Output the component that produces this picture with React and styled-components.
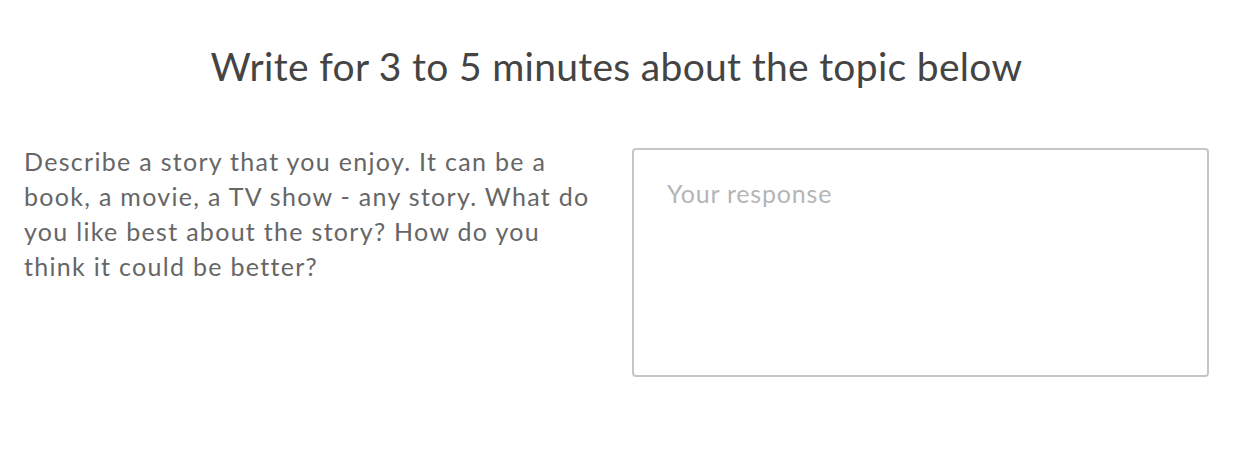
import React from "react";
import styled, { createGlobalStyle } from "styled-components";

const GlobalStyle = createGlobalStyle`
  body {
    margin: 0;
    background: #fff;
    font-family: Lato, "Open Sans", sans-serif;
  }
`;

const Page = styled.div`
  padding: 0 24px;
`;

const Title = styled.h1`
  margin: 0;
  padding-top: 40px;
  text-align: center;
  font-size: 39px;
  font-weight: 400;
  letter-spacing: 0.3px;
  line-height: 52px;
  color: #444;
`;

const Columns = styled.div`
  display: grid;
  grid-template-columns: 1fr 577px;
  gap: 31px;
  margin-top: 56px;
`;

const Prompt = styled.p`
  margin: -4px 0 0;
  max-width: 572px;
  font-size: 25px;
  letter-spacing: 1.3px;
  line-height: 35px;
  color: #666;
`;

const Response = styled.textarea`
  box-sizing: border-box;
  width: 100%;
  height: 229px;
  resize: none;
  border: 2px solid #c6c6c6;
  border-radius: 4px;
  padding: 28px 33px;
  font-family: inherit;
  font-size: 25px;
  letter-spacing: 0.8px;
  color: #444;
  outline: none;

  &::placeholder {
    color: #b5b5b5;
  }
`;

export default function App() {
  return (
    <Page>
      <GlobalStyle />
      <Title>Write for 3 to 5 minutes about the topic below</Title>
      <Columns>
        <Prompt>
          Describe a story that you enjoy. It can be a book, a movie, a TV
          show - any story. What do you like best about the story? How do you
          think it could be better?
        </Prompt>
        <Response placeholder="Your response" />
      </Columns>
    </Page>
  );
}
